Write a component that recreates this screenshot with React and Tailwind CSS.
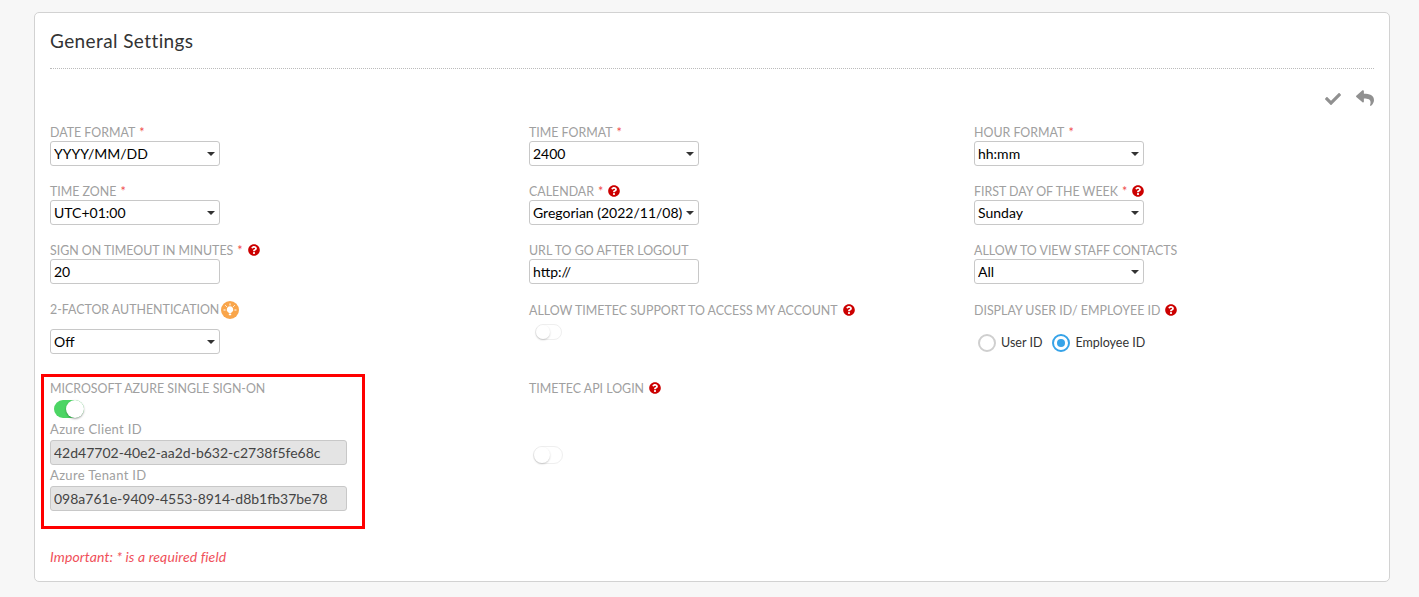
import React from 'react';
import { FaCheck, FaReply, FaQuestionCircle } from 'react-icons/fa';

const Help = () => <FaQuestionCircle className="inline-block ml-[5px] w-[12px] h-[12px] text-[#cc0000] align-[-1px]" />;
const Req = () => <span className="text-[#f0504f] ml-[4px]">*</span>;

function Label({ children, className = 'text-[12.4px]' }) {
  return (
    <div className={`h-[18px] leading-[20px] text-[#a0a0a0] whitespace-nowrap ${className}`}>
      {children}
    </div>
  );
}

function Select({ value }) {
  return (
    <div className="relative w-[170px] h-[25px]">
      <select
        defaultValue={value}
        className="appearance-none block w-full h-full bg-white border border-[#c8c8c8] rounded-[3px] pl-[3px] text-[14px] text-black outline-none"
      >
        <option>{value}</option>
      </select>
      <span className="absolute right-[5px] top-[11px] w-0 h-0 border-x-[4px] border-x-transparent border-t-[4px] border-t-[#333]" />
    </div>
  );
}

function TextField({ value, disabled, className = 'w-[170px]' }) {
  return (
    <input
      readOnly
      value={value}
      className={`block h-[25px] border border-[#c8c8c8] rounded-[3px] px-[3px] text-[14px] outline-none ${
        disabled ? 'bg-[#e4e4e4] text-[#444]' : 'bg-white text-black'
      } ${className}`}
    />
  );
}

function Toggle({ on, className = 'w-[30px] h-[18px]' }) {
  return (
    <div className={`relative rounded-full ${on ? 'bg-[#4cd564]' : 'bg-white border border-[#efefef]'} ${className}`}>
      <span
        className={`absolute top-0 aspect-square h-full rounded-full bg-white ${
          on ? 'right-0 shadow-[0_1px_2px_rgba(0,0,0,0.35)]' : 'left-0 shadow-[0_1px_2px_rgba(0,0,0,0.2)]'
        }`}
      />
    </div>
  );
}

function Radio({ label, checked }) {
  return (
    <label className="flex items-center gap-[5px] text-[12.5px] text-[#333]">
      <span
        className={`flex items-center justify-center w-[18px] h-[18px] rounded-full border-2 bg-white ${
          checked ? 'border-[#36a3e8]' : 'border-[#cfcfcf]'
        }`}
      >
        {checked && <span className="w-[8px] h-[8px] rounded-full bg-[#36a3e8]" />}
      </span>
      {label}
    </label>
  );
}

function Field({ label, children }) {
  return (
    <div className="h-[59px]">
      <Label>{label}</Label>
      {children}
    </div>
  );
}

// bombilla con rayos sobre circulo naranja
function TipIcon() {
  return (
    <svg viewBox="0 0 18 18" className="ml-[2px] mt-[1px] w-[18px] h-[18px]">
      <circle cx="9" cy="9" r="9" fill="#f9a54a" />
      <path d="M9 5.2a3.2 3.2 0 0 0-1.9 5.8c.4.3.6.7.6 1.1h2.6c0-.4.2-.8.6-1.1A3.2 3.2 0 0 0 9 5.2z" fill="#fff" />
      <rect x="7.8" y="12.6" width="2.4" height="1.6" rx="0.5" fill="#fff" />
      <path d="M9 2.8v1.3M4.6 4.6l.9.9M13.4 4.6l-.9.9M2.9 9h1.3M13.8 9h1.3" stroke="#fff" strokeWidth="1" strokeLinecap="round" />
    </svg>
  );
}

const azureLabel = 'text-[13px] tracking-[0.33px]';

export default function App() {
  return (
    <div className="min-h-[597px] bg-[#f7f7f7] pt-[12px] pl-[34px] pr-[29px] pb-[15px] font-['Lato','Open_Sans',sans-serif]">
      <div className="bg-white border border-[#d2d2d2] rounded-[5px] h-[570px] px-[15px]">
        <h2 className="h-[56px] border-b border-dotted border-[#bbbbbb] pt-[16px] text-[19px] tracking-[0.4px] leading-[24px] text-[#333]">
          General Settings
        </h2>

        <div className="flex justify-end gap-[15px] pt-[20px] h-[54px] text-[#909090]">
          <FaCheck className="w-[16px] h-[16px] mt-[2px]" />
          <FaReply className="w-[18px] h-[18px]" />
        </div>

        <div className="grid grid-cols-[479px_445px_1fr]">
          <Field label={<>DATE FORMAT<Req /></>}><Select value="YYYY/MM/DD" /></Field>
          <Field label={<>TIME FORMAT<Req /></>}><Select value="2400" /></Field>
          <Field label={<>HOUR FORMAT<Req /></>}><Select value="hh:mm" /></Field>

          <Field label={<>TIME ZONE<Req /></>}><Select value="UTC+01:00" /></Field>
          <Field label={<>CALENDAR<Req /><Help /></>}><Select value="Gregorian (2022/11/08)" /></Field>
          <Field label={<>FIRST DAY OF THE WEEK<Req /><Help /></>}><Select value="Sunday" /></Field>

          <Field label={<>SIGN ON TIMEOUT IN MINUTES<Req /><Help /></>}><TextField value="20" /></Field>
          <Field label="URL TO GO AFTER LOGOUT"><TextField value="http://" /></Field>
          <Field label="ALLOW TO VIEW STAFF CONTACTS"><Select value="All" /></Field>

          <div className="h-[74px]">
            <Label className="flex items-start text-[12.4px]">
              2-FACTOR AUTHENTICATION
              <TipIcon />
            </Label>
            <div className="mt-[11px]"><Select value="Off" /></div>
          </div>
          <div className="pt-[1px]">
            <Label>ALLOW TIMETEC SUPPORT TO ACCESS MY ACCOUNT<Help /></Label>
            <div className="ml-[6px] mt-[5px]"><Toggle className="w-[27px] h-[16px]" /></div>
          </div>
          <div className="pt-[1px]">
            <Label>DISPLAY USER ID/ EMPLOYEE ID<Help /></Label>
            <div className="flex gap-[10px] ml-[4px] mt-[15px]">
              <Radio label="User ID" />
              <Radio label="Employee ID" checked />
            </div>
          </div>

          <div>
            <div className="w-[324px] h-[155px] -ml-[9px] border-[3px] border-[#ff0000] pl-[6px] pt-[2px]">
              <Label>MICROSOFT AZURE SINGLE SIGN-ON</Label>
              <div className="ml-[4px] mt-[3px]"><Toggle on /></div>
              <div className="mt-[1px] mb-[3px]"><Label className={azureLabel}>Azure Client ID</Label></div>
              <TextField value="42d47702-40e2-aa2d-b632-c2738f5fe68c" disabled className="w-[297px]" />
              <div className="mb-[3px]"><Label className={azureLabel}>Azure Tenant ID</Label></div>
              <TextField value="098a761e-9409-4553-8914-d8b1fb37be78" disabled className="w-[297px]" />
            </div>
          </div>
          <div className="pt-[5px]">
            <Label>TIMETEC API LOGIN<Help /></Label>
            <div className="ml-[4px] mt-[49px]"><Toggle /></div>
          </div>
          <div />
        </div>

        <p className="mt-[18px] text-[14px] tracking-[0.12px] leading-[20px] italic text-[#f0505a]">Important: * is a required field</p>
      </div>
    </div>
  );
}
